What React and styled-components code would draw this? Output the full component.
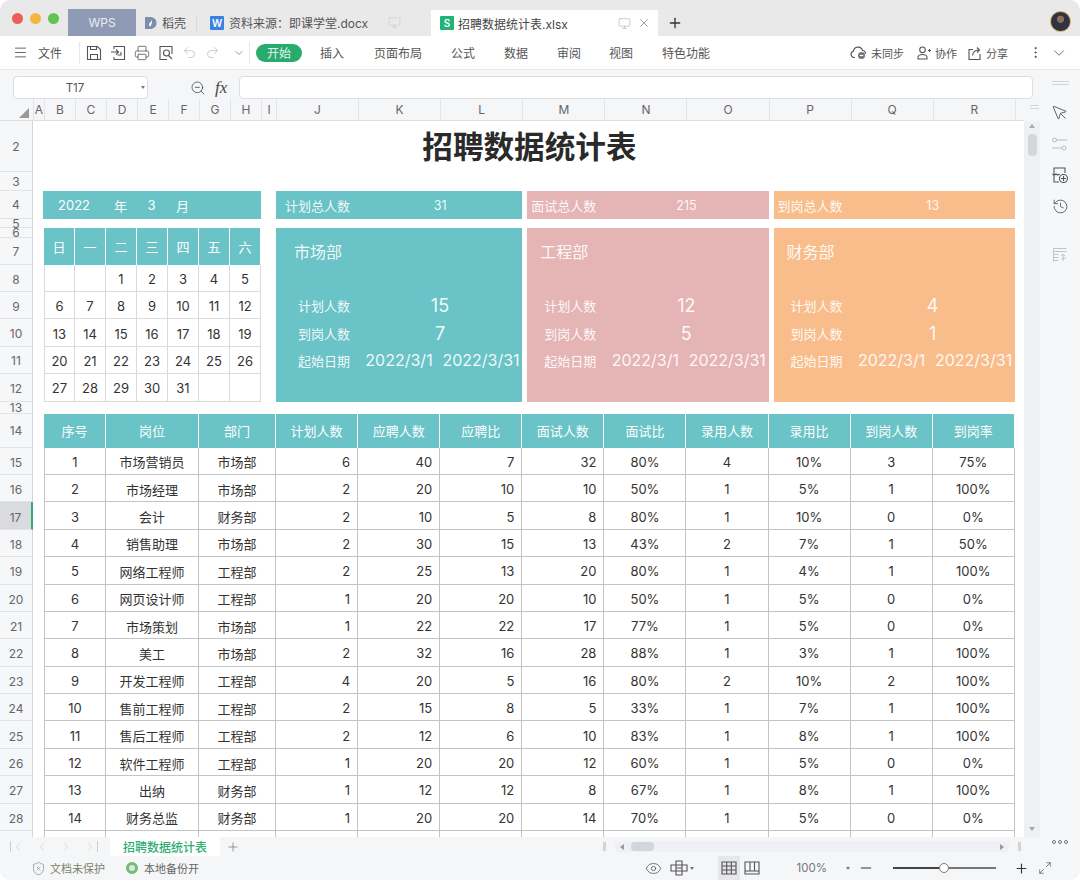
import React from 'react'
import styled, { createGlobalStyle } from 'styled-components'
import {
  Menu, Printer, Undo2, Redo2, ZoomOut, X, Plus, Monitor, ChevronDown, ChevronLeft, ChevronRight,
  MoreVertical, History, MousePointer, Eye, ShieldX, Minus, Maximize2,
} from 'lucide-react'

const TEAL = '#6ac3c7'
const PINK = '#e5b5b5'
const ORANGE = '#f9bd8c'
const FONT = `Inter, "Noto Sans CJK SC", sans-serif`

const GlobalStyle = createGlobalStyle`
  html, body {
    margin: 0;
    padding: 0;
    background: #fff;
    overflow: hidden;
  }
  * {
    box-sizing: border-box;
  }
`

const COLUMNS = ['A', 'B', 'C', 'D', 'E', 'F', 'G', 'H', 'I', 'J', 'K', 'L', 'M', 'N', 'O', 'P', 'Q', 'R']
const ROW_HEIGHTS = { 2: 51, 3: 19, 4: 28, 5: 9, 6: 10, 7: 27, 8: 27, 13: 12, 14: 34 }
const ROW_NUMBERS = Array.from({ length: 28 }, (_, i) => i + 2)
const CALENDAR = [
  ['', '', 1, 2, 3, 4, 5],
  [6, 7, 8, 9, 10, 11, 12],
  [13, 14, 15, 16, 17, 18, 19],
  [20, 21, 22, 23, 24, 25, 26],
  [27, 28, 29, 30, 31, '', ''],
]
const HEADERS = ['序号', '岗位', '部门', '计划人数', '应聘人数', '应聘比', '面试人数', '面试比', '录用人数', '录用比', '到岗人数', '到岗率']
// grid lines of each table column, the first three are merged cells
const TABLE_COLUMNS = ['3 / 5', '5 / 8', '8 / 11', '11', '12', '13', '14', '15', '16', '17', '18', '19']
const RECORDS = [
  [1, '市场营销员', '市场部', 6, 40, 7, 32, '80%', 4, '10%', 3, '75%'],
  [2, '市场经理', '市场部', 2, 20, 10, 10, '50%', 1, '5%', 1, '100%'],
  [3, '会计', '财务部', 2, 10, 5, 8, '80%', 1, '10%', 0, '0%'],
  [4, '销售助理', '市场部', 2, 30, 15, 13, '43%', 2, '7%', 1, '50%'],
  [5, '网络工程师', '工程部', 2, 25, 13, 20, '80%', 1, '4%', 1, '100%'],
  [6, '网页设计师', '工程部', 1, 20, 20, 10, '50%', 1, '5%', 0, '0%'],
  [7, '市场策划', '市场部', 1, 22, 22, 17, '77%', 1, '5%', 0, '0%'],
  [8, '美工', '市场部', 2, 32, 16, 28, '88%', 1, '3%', 1, '100%'],
  [9, '开发工程师', '工程部', 4, 20, 5, 16, '80%', 2, '10%', 2, '100%'],
  [10, '售前工程师', '工程部', 2, 15, 8, 5, '33%', 1, '7%', 1, '100%'],
  [11, '售后工程师', '工程部', 2, 12, 6, 10, '83%', 1, '8%', 1, '100%'],
  [12, '软件工程师', '工程部', 1, 20, 20, 12, '60%', 1, '5%', 0, '0%'],
  [13, '出纳', '财务部', 1, 12, 12, 8, '67%', 1, '8%', 1, '100%'],
  [14, '财务总监', '财务部', 1, 20, 20, 14, '70%', 1, '5%', 0, '0%'],
  ['', '', '', '', '', '', '', '', '', '', '', ''],
]
const DEPARTMENTS = [
  { name: '市场部', column: '11 / 14', first: 82, color: TEAL, gap: 0, total: '计划总人数', totalValue: 31, plan: 15, arrive: 7 },
  { name: '工程部', column: '14 / 17', first: 77, color: PINK, gap: 5, total: '面试总人数', totalValue: 215, plan: 12, arrive: 5 },
  { name: '财务部', column: '17 / 20', first: 77, color: ORANGE, gap: 5, total: '到岗总人数', totalValue: 13, plan: 4, arrive: 1 },
]

const SaveIcon = () => (
  <svg width="16" height="16" viewBox="0 0 16 16" fill="none" stroke="#555" strokeWidth="1.1">
    <path d="M1.500 1.500h10l3 3v10h-13z" />
    <path d="M4.500 14.500v-5h7v5M4.500 1.500v3h6v-3" />
  </svg>
)
const SaveAsIcon = () => (
  <svg width="16" height="16" viewBox="0 0 16 16" fill="none" stroke="#555" strokeWidth="1.1">
    <path d="M4 4V1.500h10.500v13H4V12" />
    <path d="M1 7h7M6 4.500 8.500 7 6 9.500M11 7v3H7.500" />
  </svg>
)
const PreviewIcon = () => (
  <svg width="16" height="16" viewBox="0 0 16 16" fill="none" stroke="#555" strokeWidth="1.1">
    <path d="M14 9V1.500H2v13h7" />
    <circle cx="8.500" cy="8" r="3" />
    <path d="m10.500 10.500 3.500 3.500" />
  </svg>
)
const DaokeIcon = () => (
  <svg width="13" height="14" viewBox="0 0 13 14">
    <path d="M1 1h5c4 0 6.500 2.500 6.500 6S10 13 6 13H1z" fill="#7f8db0" />
    <path d="M7.500 3.500C8 6 5 6.500 5 8.500c0 1.200 1 2 2 2-.6-1.500 2-3 .5-7z" fill="#fff" />
  </svg>
)
const FileIcon = ({ color, letter }) => (
  <FileBadge $color={color}>{letter}</FileBadge>
)
const CloudIcon = () => (
  <svg width="17" height="15" viewBox="0 0 17 15" fill="none" stroke="#555" strokeWidth="1.1">
    <path d="M5 12.500H4A3.200 3.200 0 0 1 3.500 6.200 4.600 4.600 0 0 1 12.500 5.500a3 3 0 0 1 3 3.500" />
    <circle cx="11.500" cy="10.500" r="3.500" fill="#777" stroke="none" />
    <path d="M9.800 10.500h3.400" stroke="#fff" />
  </svg>
)
const PersonIcon = () => (
  <svg width="14" height="14" viewBox="0 0 14 14" fill="none" stroke="#555" strokeWidth="1.1">
    <circle cx="5.500" cy="3.800" r="2.800" />
    <path d="M1 13v-1.500C1 9.500 2.500 8.500 5.500 8.500s4.500 1 4.500 3V13zM11 4.500h3M12.500 3v3" />
  </svg>
)
const ShareIcon = () => (
  <svg width="14" height="14" viewBox="0 0 14 14" fill="none" stroke="#555" strokeWidth="1.1">
    <path d="M5 3.500H1v10h11V8" />
    <path d="M4.500 9.500C5 6 7 4 11 4M9 1.500 11.500 4 9 6.500" />
  </svg>
)
const SlidersIcon = () => (
  <svg width="18" height="16" viewBox="0 0 18 16" fill="none" stroke="#bbb" strokeWidth="1">
    <circle cx="3.500" cy="4" r="2" />
    <path d="M5.500 4h11M1 12h10" />
    <circle cx="13" cy="12" r="2" />
  </svg>
)
const GalleryIcon = () => (
  <svg width="18" height="18" viewBox="0 0 18 18" fill="none" stroke="#555" strokeWidth="1.1">
    <path d="M3 8V2h11v5M3 8v8h5" />
    <path d="M1.500 8c1 1 2.500 1 3.500 0 1 1 2.500 1 3.500 0" />
    <circle cx="12.500" cy="12.500" r="4" />
    <path d="M10 12.500h5M12.500 10v5" />
  </svg>
)
const SortPanelIcon = () => (
  <svg width="16" height="16" viewBox="0 0 16 16" fill="none" stroke="#c4c4c4" strokeWidth="1">
    <path d="M1.500 1.500h13M1.500 4.500h13M1.500 7.500h5M1.500 10.500h5M1.500 13.500h5M1.500 1.500v13M11 14V7M9 9l2-2 2 2M14 11h-4l1.500 2" />
  </svg>
)
const FreezeIcon = () => (
  <svg width="18" height="16" viewBox="0 0 18 16" fill="none" stroke="#555" strokeWidth="1.1">
    <path d="M6 1h6v14H6zM1 5h16v6H1zM6 8h6" />
  </svg>
)
const GridViewIcon = () => (
  <svg width="16" height="14" viewBox="0 0 16 14" fill="none" stroke="#555" strokeWidth="1.1">
    <path d="M1 1h14v12H1zM1 5h14M1 9h14M5.700 1v12M10.300 1v12" />
  </svg>
)
const PageViewIcon = () => (
  <svg width="16" height="14" viewBox="0 0 16 14" fill="none" stroke="#555" strokeWidth="1.1">
    <path d="M1 1h14v12H1zM1 10h14M6 1v9M10.500 1v9" />
  </svg>
)

function TitleBar() {
  return (
    <TitleRow>
      <Lights>
        <Light $color="#ec5f57" />
        <Light $color="#f4b63f" />
        <Light $color="#5fc451" />
      </Lights>
      <HomeTab>WPS</HomeTab>
      <DocTab $width={60}>
        <DaokeIcon />
        稻壳
      </DocTab>
      <TabDivider />
      <DocTab $width={229}>
        <FileIcon color="#3b82e0" letter="W" />
        资料来源：即课学堂.docx
        <TabIcons>
          <Monitor size={13} color="#ccc" strokeWidth={1.3} />
        </TabIcons>
      </DocTab>
      <ActiveTab>
        <FileIcon color="#1fb37a" letter="S" />
        招聘数据统计表.xlsx
        <TabIcons>
          <Monitor size={13} color="#bbb" strokeWidth={1.3} />
          <X size={14} color="#777" strokeWidth={1.2} />
        </TabIcons>
      </ActiveTab>
      <NewTab>
        <Plus size={16} color="#333" strokeWidth={2} />
      </NewTab>
      <Avatar />
    </TitleRow>
  )
}

function Ribbon() {
  const menus = [['插入', 18], ['页面布局', 30], ['公式', 29], ['数据', 29], ['审阅', 29], ['视图', 28], ['特色功能', 29]]
  return (
    <RibbonRow>
      <Menu size={15} color="#444" strokeWidth={1.3} />
      <FileMenu>文件</FileMenu>
      <RibbonDivider />
      <QuickIcons>
        <SaveIcon />
        <SaveAsIcon />
        <Printer size={16} color="#555" strokeWidth={1.2} />
        <PreviewIcon />
        <Undo2 size={15} color="#bbb" strokeWidth={1.2} />
        <Redo2 size={15} color="#bbb" strokeWidth={1.2} />
        <MoreCaret><ChevronDown size={12} color="#666" strokeWidth={1.4} /></MoreCaret>
      </QuickIcons>
      <RibbonDivider $left={4} />
      <StartPill>开始</StartPill>
      {menus.map(([name, left]) => (
        <MenuItem key={name} $left={left}>{name}</MenuItem>
      ))}
      <RibbonActions>
        <ActionItem><CloudIcon />未同步</ActionItem>
        <ActionItem $left={13}><PersonIcon />协作</ActionItem>
        <ActionItem $left={11}><ShareIcon />分享</ActionItem>
        <ActionItem $left={20}><MoreVertical size={15} color="#444" strokeWidth={1.4} /></ActionItem>
        <ActionItem $left={7}><ChevronDown size={18} color="#555" strokeWidth={1.1} /></ActionItem>
      </RibbonActions>
    </RibbonRow>
  )
}

function FormulaBar() {
  return (
    <FormulaRow>
      <NameBox>
        T17
        <Caret />
      </NameBox>
      <ZoomOut size={16} color="#444" strokeWidth={1.2} />
      <FxLabel>fx</FxLabel>
      <FormulaInput />
    </FormulaRow>
  )
}

function Department({ dept }) {
  return (
    <>
      <TotalStrip $column={dept.column} $first={dept.first} $color={dept.color} $gap={dept.gap}>
        <StatLabel>{dept.total}</StatLabel>
        <TotalValue>{dept.totalValue}</TotalValue>
      </TotalStrip>
      <DeptCard $column={dept.column} $color={dept.color} $gap={dept.gap}>
        <DeptName $left={dept.first - 64}>{dept.name}</DeptName>
        <StatRow $first={dept.first}>
          <StatLabel>计划人数</StatLabel>
          <StatValue>{dept.plan}</StatValue>
        </StatRow>
        <StatRow $first={dept.first}>
          <StatLabel>到岗人数</StatLabel>
          <StatValue>{dept.arrive}</StatValue>
        </StatRow>
        <StatRow $first={dept.first}>
          <StatLabel>起始日期</StatLabel>
          <DateValue>2022/3/1</DateValue>
          <DateValue>2022/3/31</DateValue>
        </StatRow>
      </DeptCard>
    </>
  )
}

function Sheet() {
  const rowTemplate = ['22px', ...ROW_NUMBERS.map((n) => `${ROW_HEIGHTS[n] || 27.4}px`)].join(' ')
  return (
    <SheetGrid style={{ gridTemplateRows: rowTemplate }}>
      <CornerCell>
        <Triangle />
      </CornerCell>
      {COLUMNS.map((letter) => (
        <ColumnHead key={letter}>{letter}</ColumnHead>
      ))}
      <ColumnFill />

      {ROW_NUMBERS.map((n) => (
        <RowHead key={n} $row={n} $active={n === 17} $tight={n === 5 || n === 6 || n === 13}>
          {n < 29 ? n : ''}
        </RowHead>
      ))}

      <SheetTitle>招聘数据统计表</SheetTitle>

      <DateStrip>
        <DateYear>2022</DateYear>
        <span>年</span>
        <span>3</span>
        <span>月</span>
      </DateStrip>
      {['日', '一', '二', '三', '四', '五', '六'].map((day, i) => (
        <WeekCell key={day} $column={i + 3}>{day}</WeekCell>
      ))}
      {CALENDAR.map((week, r) =>
        week.map((day, c) => (
          <DayCell key={`${r}-${c}`} $row={r + 8} $column={c + 3}>{day}</DayCell>
        )),
      )}

      {DEPARTMENTS.map((dept) => (
        <Department key={dept.name} dept={dept} />
      ))}

      {HEADERS.map((title, i) => (
        <TableHead key={title} $column={TABLE_COLUMNS[i]}>{title}</TableHead>
      ))}
      {RECORDS.map((record, r) =>
        record.map((value, c) => (
          <TableCell key={`${r}-${c}`} $row={r + 15} $column={TABLE_COLUMNS[c]} $number={c >= 3 && c <= 6}>
            {value}
          </TableCell>
        )),
      )}
    </SheetGrid>
  )
}

function SheetTabs() {
  return (
    <TabsRow>
      <TabNav>
        <NavEdge><ChevronLeft size={14} color="#ccc" strokeWidth={1.2} /></NavEdge>
        <ChevronLeft size={14} color="#ccc" strokeWidth={1.2} />
        <ChevronRight size={14} color="#ccc" strokeWidth={1.2} />
        <NavEdge $end><ChevronRight size={14} color="#ccc" strokeWidth={1.2} /></NavEdge>
      </TabNav>
      <SheetTab>招聘数据统计表</SheetTab>
      <NewSheet>
        <Plus size={14} color="#666" strokeWidth={1.1} />
      </NewSheet>
      <HScroll>
        <Grip />
        <HTrack>
          <ArrowLeft />
          <HThumb />
          <ArrowRight />
        </HTrack>
        <Grip />
      </HScroll>
    </TabsRow>
  )
}

function StatusBar() {
  return (
    <StatusRow>
      <ShieldX size={15} color="#888" strokeWidth={1.1} />
      <ProtectText>文档未保护</ProtectText>
      <BackupDot />
      <StatusText>本地备份开</StatusText>
      <StatusRight>
        <Eye size={17} color="#555" strokeWidth={1.1} />
        <FreezeGroup>
          <FreezeIcon />
          <Caret />
        </FreezeGroup>
        <ViewButton $active><GridViewIcon /></ViewButton>
        <ViewButton><PageViewIcon /></ViewButton>
        <ZoomText>100%</ZoomText>
        <Caret />
        <Minus size={16} color="#333" strokeWidth={1.8} />
        <ZoomSlider>
          <ZoomKnob />
        </ZoomSlider>
        <Plus size={15} color="#333" strokeWidth={1.8} />
        <ExpandIcon><Maximize2 size={14} color="#555" strokeWidth={1.2} /></ExpandIcon>
      </StatusRight>
    </StatusRow>
  )
}

function App() {
  return (
    <Window>
      <GlobalStyle />
      <TitleBar />
      <Ribbon />
      <Body>
        <Workspace>
          <FormulaBar />
          <SheetArea>
            <Sheet />
            <VScroll>
              <VGrip />
              <VTrack>
                <ArrowUp />
                <VThumb />
                <ArrowDown />
              </VTrack>
            </VScroll>
          </SheetArea>
          <SheetTabs />
        </Workspace>
        <SideBar>
          <VGrip $wide />
          <MousePointer size={18} color="#555" strokeWidth={1.2} />
          <SlidersIcon />
          <GalleryIcon />
          <History size={17} color="#555" strokeWidth={1.2} />
          <SideSpacer />
          <SortPanelIcon />
          <SideDots>
            <i /><i /><i />
          </SideDots>
        </SideBar>
      </Body>
      <StatusBar />
    </Window>
  )
}

const Window = styled.div`
  width: 1080px;
  height: 880px;
  display: flex;
  flex-direction: column;
  overflow: hidden;
  border-radius: 10px;
  background: #fff;
  color: #333;
  font-family: ${FONT};
`

const TitleRow = styled.div`
  height: 36px;
  flex: none;
  display: flex;
  align-items: flex-end;
  background: #e9e9e9;
  font-size: 12px;
  color: #555;
`

const Lights = styled.div`
  width: 68px;
  height: 36px;
  padding: 0 0 0 12px;
  display: flex;
  align-items: center;
  gap: 7px;
`

const Light = styled.span`
  width: 11px;
  height: 11px;
  border-radius: 50%;
  background: ${({ $color }) => $color};
`

const HomeTab = styled.div`
  width: 68px;
  height: 27px;
  display: flex;
  align-items: center;
  justify-content: center;
  background: #8f9bb6;
  color: #e8ecf3;
  font-size: 12px;
`

const DocTab = styled.div`
  width: ${({ $width }) => $width}px;
  height: 27px;
  padding-left: 8px;
  display: flex;
  align-items: center;
  gap: 5px;
  white-space: nowrap;
`

const TabDivider = styled.span`
  width: 1px;
  height: 16px;
  margin: 0 5px 5px 0;
  background: #d9d9d9;
`

const TabIcons = styled.span`
  margin-left: auto;
  padding-right: 30px;
  display: flex;
  align-items: center;
  gap: 6px;
`

const ActiveTab = styled.div`
  width: 227px;
  height: 26px;
  padding-left: 9px;
  display: flex;
  align-items: center;
  gap: 4px;
  background: #fff;
  color: #444;
  white-space: nowrap;
  ${TabIcons} {
    padding-right: 7px;
  }
`

const FileBadge = styled.span`
  width: 14px;
  height: 14px;
  flex: none;
  display: flex;
  align-items: center;
  justify-content: center;
  border-radius: 1px;
  background: ${({ $color }) => $color};
  color: #fff;
  font-size: 10px;
  font-weight: 600;
`

const NewTab = styled.div`
  height: 26px;
  margin-left: 9px;
  display: flex;
  align-items: center;
`

const Avatar = styled.div`
  width: 21px;
  height: 21px;
  margin: 0 9px 4px auto;
  border-radius: 50%;
  border: 1px solid #d9a760;
  background: radial-gradient(circle at 50% 38%, #8c6f5f 0 22%, #2d3440 26% 100%);
`

const RibbonRow = styled.div`
  height: 34px;
  flex: none;
  padding-left: 13px;
  display: flex;
  align-items: center;
  border-bottom: 1px solid #e8e9eb;
  background: #fff;
  font-size: 12px;
  color: #555;
`

const FileMenu = styled.span`
  margin-left: 10px;
`

const RibbonDivider = styled.span`
  width: 1px;
  height: 22px;
  margin-left: ${({ $left }) => $left || 17}px;
  background: #e6e6e6;
`

const QuickIcons = styled.div`
  margin-left: 6px;
  display: flex;
  align-items: center;
  gap: 8px;
`

const MoreCaret = styled.span`
  margin-left: 5px;
  display: flex;
`

const StartPill = styled.span`
  width: 46px;
  height: 18px;
  margin-left: 6px;
  display: flex;
  align-items: center;
  justify-content: center;
  border-radius: 9px;
  background: #28ac6e;
  color: #e6f6ee;
`

const MenuItem = styled.span`
  margin-left: ${({ $left }) => $left}px;
`

const RibbonActions = styled.div`
  margin-left: auto;
  padding-right: 12px;
  display: flex;
  align-items: center;
  font-size: 11px;
`

const ActionItem = styled.span`
  margin-left: ${({ $left }) => $left || 0}px;
  display: flex;
  align-items: center;
  gap: 4px;
  white-space: nowrap;
`

const Body = styled.div`
  flex: 1;
  min-height: 0;
  display: flex;
`

const Workspace = styled.div`
  width: 1040px;
  display: flex;
  flex-direction: column;
`

const FormulaRow = styled.div`
  height: 29px;
  flex: none;
  padding: 6px 7px 0 13px;
  display: flex;
  align-items: center;
  background: #f5f6f8;
`

const NameBox = styled.div`
  position: relative;
  width: 135px;
  height: 23px;
  margin-right: 42px;
  padding-right: 11px;
  display: flex;
  align-items: center;
  justify-content: center;
  border: 1px solid #dcdde0;
  border-radius: 4px;
  background: #fff;
  font-size: 11.500px;
  color: #555;
  span {
    position: absolute;
    right: 2px;
    top: 9px;
  }
`

const Caret = styled.span`
  width: 0;
  height: 0;
  border-left: 2.500px solid transparent;
  border-right: 2.500px solid transparent;
  border-top: 3.500px solid #777;
`

const FxLabel = styled.span`
  width: 27px;
  padding-left: 9px;
  font-family: 'Liberation Serif', serif;
  font-style: italic;
  font-size: 17px;
  color: #444;
`

const FormulaInput = styled.div`
  flex: 1;
  height: 23px;
  margin-left: 6px;
  border: 1px solid #dcdde0;
  border-radius: 4px;
  background: #fff;
`

const SheetArea = styled.div`
  flex: 1;
  min-height: 0;
  display: flex;
`

const SheetGrid = styled.div`
  width: 1024px;
  height: 100%;
  overflow: hidden;
  display: grid;
  grid-template-columns: 33px 11px repeat(7, 31px) 15px repeat(9, 82.100px) 9.100px;
  align-content: start;
  background: #fff;
  font-size: 13px;
`

const CornerCell = styled.div`
  grid-column: 1;
  grid-row: 1;
  position: relative;
  background: #f5f6f8;
  border-bottom: 1px solid #ddd;
`

const Triangle = styled.span`
  position: absolute;
  right: 4px;
  bottom: 2px;
  width: 0;
  height: 0;
  border-left: 10px solid transparent;
  border-bottom: 10px solid #999;
`

const ColumnHead = styled.div`
  grid-row: 1;
  display: flex;
  align-items: center;
  justify-content: center;
  background: #f5f6f8;
  border-left: 1px solid #e3e4e7;
  border-bottom: 1px solid #ddd;
  font-size: 12px;
  color: #666;
`

const ColumnFill = styled.div`
  grid-row: 1;
  background: #f5f6f8;
  border-left: 1px solid #e3e4e7;
  border-bottom: 1px solid #ddd;
`

const RowHead = styled.div`
  grid-column: 1;
  grid-row: ${({ $row }) => $row};
  display: flex;
  align-items: center;
  justify-content: center;
  padding-top: ${({ $row }) => ($row >= 15 ? 3 : $row >= 8 && $row < 13 ? 2 : 0)}px;
  overflow: ${({ $tight }) => ($tight ? 'visible' : 'hidden')};
  background: ${({ $active }) => ($active ? '#d9dbdf' : '#f6f7f9')};
  border-bottom: 1px solid #e2e3e6;
  border-right: ${({ $active }) => ($active ? '2px solid #2fae74' : '1px solid #d5d6d9')};
  font-size: 12px;
  color: #666;
`

const SheetTitle = styled.div`
  grid-column: 3 / 20;
  grid-row: 2;
  display: flex;
  align-items: center;
  justify-content: center;
  padding-bottom: 3px;
  font-size: 30.600px;
  font-weight: 700;
  color: #2a2a2a;
`

const DateStrip = styled.div`
  grid-column: 3 / 10;
  grid-row: 4;
  margin-left: -1px;
  display: grid;
  grid-template-columns: repeat(7, 31px);
  align-items: center;
  justify-items: center;
  background: ${TEAL};
  color: #fff;
`

const DateYear = styled.span`
  grid-column: span 2;
`

const WeekCell = styled.div`
  grid-column: ${({ $column }) => $column};
  grid-row: 6 / 8;
  display: flex;
  align-items: center;
  justify-content: center;
  padding-bottom: 1px;
  background: ${TEAL};
  border-right: 1px solid #fff;
  color: #fff;
`

const DayCell = styled.div`
  grid-column: ${({ $column }) => $column};
  grid-row: ${({ $row }) => $row};
  display: flex;
  align-items: center;
  justify-content: center;
  padding-top: 2px;
  border-right: 1px solid #dadada;
  border-bottom: 1px solid #dadada;
  ${({ $column }) => $column === 3 && 'border-left: 1px solid #dadada;'}
  color: #333;
`

const TotalStrip = styled.div`
  grid-column: ${({ $column }) => $column};
  grid-row: 4;
  margin-left: ${({ $gap }) => $gap}px;
  display: grid;
  grid-template-columns: ${({ $first }) => $first}px 1fr;
  align-items: center;
  background: ${({ $color }) => $color};
  color: rgba(255, 255, 255, 0.92);
`

const TotalValue = styled.span`
  text-align: center;
  font-size: 12.500px;
`

const DeptCard = styled.div`
  grid-column: ${({ $column }) => $column};
  grid-row: 6 / 13;
  margin-left: ${({ $gap }) => $gap}px;
  display: flex;
  flex-direction: column;
  background: ${({ $color }) => $color};
  color: rgba(255, 255, 255, 0.92);
`

const DeptName = styled.div`
  height: 64px;
  padding: 14px 0 0 ${({ $left }) => $left}px;
  line-height: 20px;
  font-size: 16px;
`

const StatRow = styled.div`
  height: 27.400px;
  display: grid;
  grid-template-columns: ${({ $first }) => $first}px 82px 82px;
  align-items: center;
`

const StatLabel = styled.span`
  padding-right: 8px;
  text-align: right;
  font-size: 13px;
  white-space: nowrap;
`

const StatValue = styled.span`
  grid-column: span 2;
  text-align: center;
  font-size: 18px;
`

const DateValue = styled.span`
  text-align: center;
  font-size: 16px;
  white-space: nowrap;
`

const TableHead = styled.div`
  grid-column: ${({ $column }) => $column};
  grid-row: 14;
  display: flex;
  align-items: center;
  justify-content: center;
  background: ${TEAL};
  border-right: 1px solid #fff;
  color: #fff;
`

const TableCell = styled.div`
  grid-column: ${({ $column }) => $column};
  grid-row: ${({ $row }) => $row};
  display: flex;
  align-items: center;
  justify-content: ${({ $number }) => ($number ? 'flex-end' : 'center')};
  padding: 2px ${({ $number }) => ($number ? 7 : 0)}px 0 0;
  border-right: 1px solid #c4c4c4;
  border-bottom: 1px solid #c4c4c4;
  ${({ $column }) => $column === '3 / 5' && 'border-left: 1px solid #c4c4c4;'}
  color: #333;
`

const VScroll = styled.div`
  width: 16px;
  display: flex;
  flex-direction: column;
  background: #f5f6f8;
`

const VGrip = styled.span`
  width: ${({ $wide }) => ($wide ? 17 : 9)}px;
  height: 4px;
  flex: none;
  margin: ${({ $wide }) => ($wide ? '0 0 5px' : '6px 0 0 6px')};
  border-top: 1px solid #d3d4d6;
  border-bottom: 1px solid #d3d4d6;
`

const VTrack = styled.div`
  flex: 1;
  margin-top: 12px;
  padding: 3px 0 6px;
  display: flex;
  flex-direction: column;
  align-items: center;
  background: #eef0f3;
`

const VThumb = styled.span`
  width: 9px;
  height: 22px;
  margin-top: 6px;
  border-radius: 4px;
  background: #d3d7dc;
`

const ArrowUp = styled.span`
  width: 0;
  height: 0;
  border-left: 3px solid transparent;
  border-right: 3px solid transparent;
  border-bottom: 4px solid #a5a8ad;
`

const ArrowDown = styled.span`
  width: 0;
  height: 0;
  margin-top: auto;
  border-left: 3px solid transparent;
  border-right: 3px solid transparent;
  border-top: 4px solid #a5a8ad;
`

const TabsRow = styled.div`
  height: 19px;
  flex: none;
  display: flex;
  align-items: center;
  background: #f5f6f8;
`

const TabNav = styled.div`
  width: 110px;
  padding-left: 10px;
  display: flex;
  align-items: center;
  gap: 10px;
`

const NavEdge = styled.span`
  display: flex;
  align-items: center;
  ${({ $end }) => ($end ? 'border-right: 1px solid #ccc;' : 'border-left: 1px solid #ccc;')}
  height: 11px;
`

const SheetTab = styled.div`
  width: 110px;
  height: 19px;
  display: flex;
  align-items: center;
  justify-content: center;
  background: #fff;
  font-size: 12px;
  font-weight: 500;
  color: #2fae74;
`

const NewSheet = styled.span`
  margin-left: 6px;
  display: flex;
`

const HScroll = styled.div`
  margin-left: auto;
  width: 418px;
  margin-right: 19px;
  display: flex;
  align-items: center;
  gap: 9px;
`

const Grip = styled.span`
  width: 3px;
  height: 9px;
  flex: none;
  background: #d3d4d6;
`

const HTrack = styled.div`
  flex: 1;
  height: 11px;
  padding: 0 5px;
  display: flex;
  align-items: center;
  border-radius: 5px;
  background: #eef0f3;
`

const HThumb = styled.span`
  width: 23px;
  height: 9px;
  margin-left: 7px;
  border-radius: 4px;
  background: #d3d7dc;
`

const ArrowLeft = styled.span`
  width: 0;
  height: 0;
  border-top: 3px solid transparent;
  border-bottom: 3px solid transparent;
  border-right: 4px solid #999;
`

const ArrowRight = styled.span`
  width: 0;
  height: 0;
  margin-left: auto;
  border-top: 3px solid transparent;
  border-bottom: 3px solid transparent;
  border-left: 4px solid #999;
`

const SideBar = styled.div`
  width: 40px;
  padding: 11px 0 12px;
  display: flex;
  flex-direction: column;
  align-items: center;
  gap: 14px;
  background: #f5f7f9;
`

const SideSpacer = styled.div`
  height: 4px;
`

const SideDots = styled.div`
  margin-top: auto;
  display: flex;
  gap: 2px;
  i {
    width: 4px;
    height: 4px;
    border: 1px solid #777;
    border-radius: 50%;
  }
`

const StatusRow = styled.div`
  height: 24px;
  flex: none;
  padding-left: 31px;
  display: flex;
  align-items: center;
  background: #f5f6f8;
  font-size: 11px;
  color: #666;
`

const StatusText = styled.span`
  margin-left: 6px;
  color: #666;
`

const ProtectText = styled(StatusText)`
  margin-left: 4px;
  margin-right: 21px;
  color: #7c8268;
`

const BackupDot = styled.span`
  width: 12px;
  height: 12px;
  border-radius: 50%;
  border: 3px solid #78b87b;
  background: #d8ecd8;
`

const StatusRight = styled.div`
  margin-left: auto;
  padding-right: 28px;
  display: flex;
  align-items: center;
  gap: 8px;
`

const FreezeGroup = styled.span`
  margin-right: 16px;
  display: flex;
  align-items: center;
  gap: 2px;
`

const ViewButton = styled.span`
  width: 22px;
  height: 24px;
  margin-left: ${({ $active }) => ($active ? 0 : -7)}px;
  display: flex;
  align-items: center;
  justify-content: center;
  background: ${({ $active }) => ($active ? '#e6e7ea' : 'transparent')};
`

const ZoomText = styled.span`
  margin-left: 26px;
  margin-right: 11px;
  font-size: 11.500px;
  color: #777;
`

const ZoomSlider = styled.span`
  position: relative;
  width: 103px;
  height: 2px;
  margin: 0 10px 0 11px;
  background: linear-gradient(90deg, #444 50%, #777 50%);
`

const ZoomKnob = styled.span`
  position: absolute;
  left: 46px;
  top: -4px;
  width: 10px;
  height: 10px;
  border: 1px solid #777;
  border-radius: 50%;
  background: #fff;
`

const ExpandIcon = styled.span`
  margin-left: 1px;
  display: flex;
`

export default App
